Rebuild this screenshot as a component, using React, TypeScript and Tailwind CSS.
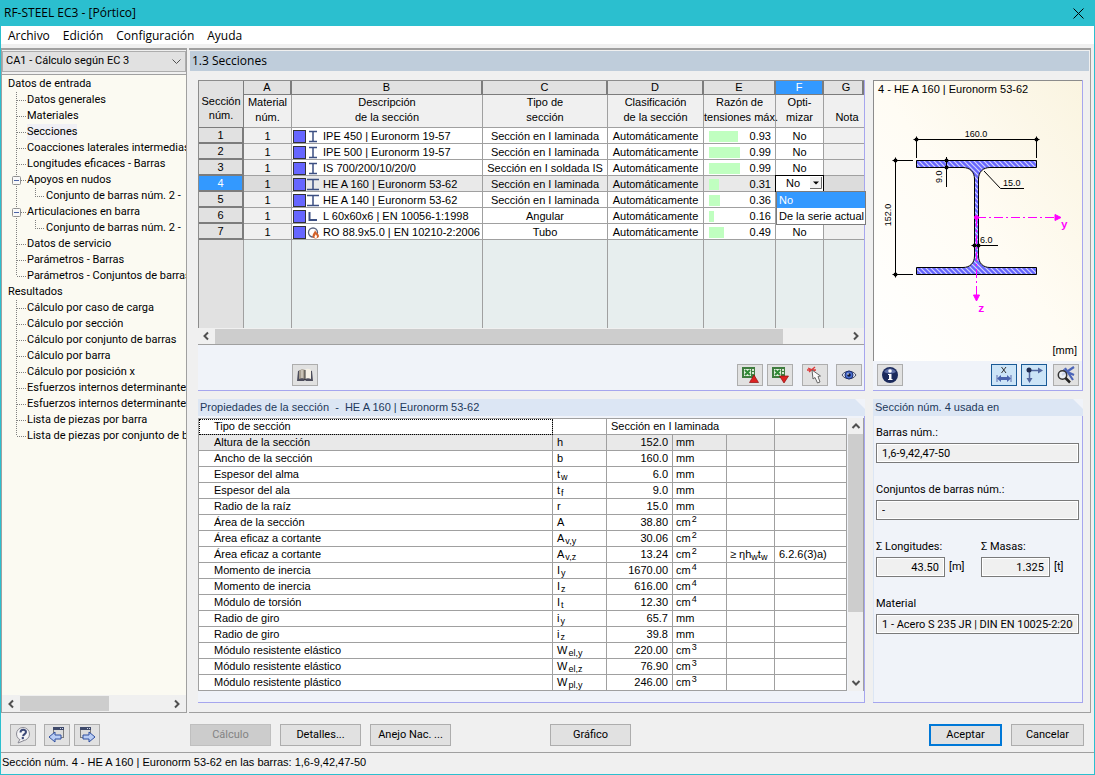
import React, { useState } from 'react';

type TreeItem = {
  label: string;
  kind: 'root' | 'item' | 'last' | 'open' | 'child';
};

const TREE: TreeItem[] = [
  { label: 'Datos de entrada', kind: 'root' },
  { label: 'Datos generales', kind: 'item' },
  { label: 'Materiales', kind: 'item' },
  { label: 'Secciones', kind: 'item' },
  { label: 'Coacciones laterales intermedias', kind: 'item' },
  { label: 'Longitudes eficaces - Barras', kind: 'item' },
  { label: 'Apoyos en nudos', kind: 'open' },
  { label: 'Conjunto de barras núm. 2 -', kind: 'child' },
  { label: 'Articulaciones en barra', kind: 'open' },
  { label: 'Conjunto de barras núm. 2 -', kind: 'child' },
  { label: 'Datos de servicio', kind: 'item' },
  { label: 'Parámetros - Barras', kind: 'item' },
  { label: 'Parámetros - Conjuntos de barras', kind: 'last' },
  { label: 'Resultados', kind: 'root' },
  { label: 'Cálculo por caso de carga', kind: 'item' },
  { label: 'Cálculo por sección', kind: 'item' },
  { label: 'Cálculo por conjunto de barras', kind: 'item' },
  { label: 'Cálculo por barra', kind: 'item' },
  { label: 'Cálculo por posición x', kind: 'item' },
  { label: 'Esfuerzos internos determinantes', kind: 'item' },
  { label: 'Esfuerzos internos determinantes', kind: 'item' },
  { label: 'Lista de piezas por barra', kind: 'item' },
  { label: 'Lista de piezas por conjunto de barras', kind: 'last' },
];

type Shape = 'narrow' | 'wide' | 'angle' | 'tube';

const SECTIONS: { name: string; shape: Shape; type: string; ratio: number }[] = [
  { name: 'IPE 450 | Euronorm 19-57', shape: 'narrow', type: 'Sección en I laminada', ratio: 0.93 },
  { name: 'IPE 500 | Euronorm 19-57', shape: 'narrow', type: 'Sección en I laminada', ratio: 0.99 },
  { name: 'IS 700/200/10/20/0', shape: 'narrow', type: 'Sección en I soldada IS', ratio: 0.99 },
  { name: 'HE A 160 | Euronorm 53-62', shape: 'wide', type: 'Sección en I laminada', ratio: 0.31 },
  { name: 'HE A 140 | Euronorm 53-62', shape: 'wide', type: 'Sección en I laminada', ratio: 0.36 },
  { name: 'L 60x60x6 | EN 10056-1:1998', shape: 'angle', type: 'Angular', ratio: 0.16 },
  { name: 'RO 88.9x5.0 | EN 10210-2:2006', shape: 'tube', type: 'Tubo', ratio: 0.49 },
];

// name, symbol, subscript, value, unit, exponent
const PROPS: [string, string, string, string, string, string][] = [
  ['Altura de la sección', 'h', '', '152.0', 'mm', ''],
  ['Ancho de la sección', 'b', '', '160.0', 'mm', ''],
  ['Espesor del alma', 't', 'w', '6.0', 'mm', ''],
  ['Espesor del ala', 't', 'f', '9.0', 'mm', ''],
  ['Radio de la raíz', 'r', '', '15.0', 'mm', ''],
  ['Área de la sección', 'A', '', '38.80', 'cm', '2'],
  ['Área eficaz a cortante', 'A', 'v,y', '30.06', 'cm', '2'],
  ['Área eficaz a cortante', 'A', 'v,z', '13.24', 'cm', '2'],
  ['Momento de inercia', 'I', 'y', '1670.00', 'cm', '4'],
  ['Momento de inercia', 'I', 'z', '616.00', 'cm', '4'],
  ['Módulo de torsión', 'I', 't', '12.30', 'cm', '4'],
  ['Radio de giro', 'i', 'y', '65.7', 'mm', ''],
  ['Radio de giro', 'i', 'z', '39.8', 'mm', ''],
  ['Módulo resistente elástico', 'W', 'el,y', '220.00', 'cm', '3'],
  ['Módulo resistente elástico', 'W', 'el,z', '76.90', 'cm', '3'],
  ['Módulo resistente plástico', 'W', 'pl,y', '246.00', 'cm', '3'],
];

function TreeGuide({ kind }: { kind: TreeItem['kind'] }) {
  if (kind === 'root') return <span className="w-[5px] shrink-0" />;
  const line = { stroke: '#808080', strokeDasharray: '1 1' };
  if (kind === 'child') {
    return (
      <svg className="w-[43px] h-4 shrink-0" viewBox="0 0 43 16">
        <path d="M13.5 0V16M32.5 0V8M32 8.5H42" fill="none" {...line} />
      </svg>
    );
  }
  return (
    <svg className="w-[24px] h-4 shrink-0" viewBox="0 0 24 16">
      <path d={kind === 'last' ? 'M13.5 0V8M14 8.5H23' : 'M13.5 0V16M14 8.5H23'} fill="none" {...line} />
      {kind === 'open' && (
        <>
          <rect x="9.5" y="4.5" width="8" height="8" rx="1" fill="#f8f8f8" stroke="#919191" />
          <path d="M11 8.5H16" stroke="#4b63a7" />
        </>
      )}
    </svg>
  );
}

function Chevron({ dir }: { dir: 'left' | 'right' | 'up' | 'down' }) {
  const d = {
    left: 'M10 4.5L6.5 8L10 11.5',
    right: 'M6 4.5L9.5 8L6 11.5',
    up: 'M4.5 10L8 6.5L11.5 10',
    down: 'M4.5 6L8 9.5L11.5 6',
  }[dir];
  return (
    <svg className="size-4 shrink-0" viewBox="0 0 16 16">
      <path d={d} fill="none" stroke="#505050" strokeWidth="2" />
    </svg>
  );
}

function ShapeIcon({ shape }: { shape: Shape }) {
  return (
    <svg className="w-[12px] h-[13px] shrink-0" viewBox="0 0 12 13">
      {shape === 'narrow' && <path d="M2 1.5H10M6 2V11M2 11.5H10" stroke="#3c4f82" strokeWidth="1.5" />}
      {shape === 'wide' && <path d="M0 1.5H12M6 2V11M0 11.5H12" stroke="#3c4f82" strokeWidth="1.5" />}
      {shape === 'angle' && <path d="M2.5 2V10H10" fill="none" stroke="#3c4f82" strokeWidth="2" />}
      {shape === 'tube' && (
        <>
          <circle cx="6" cy="6.5" r="4.5" fill="none" stroke="#5a6480" strokeWidth="1.3" />
          <path d="M8 4c0 2-2.5 3.5-2.5 6 0 1.5 1.2 2.5 3 2.5S12 11.5 12 10c0-2.5-3-3-4-6z" fill="#d4622a" />
          <path d="M8.7 8c0 1.5-1.2 1.5-1.2 3 0 .7.5 1 1.2 1s1.3-.4 1.3-1.2C10 9.5 9 9 8.7 8z" fill="#fff" />
        </>
      )}
    </svg>
  );
}

function IconButton({ label, active, children }: { label: string; active?: boolean; children: React.ReactNode }) {
  return (
    <button
      aria-label={label}
      className={`flex h-[22px] w-[26px] shrink-0 items-center justify-center border ${
        active ? 'border-[#1a5a96] bg-[#cce4f7]' : 'border-[#adadad] bg-[#e1e1e1]'
      }`}
    >
      <svg className="size-[18px]" viewBox="0 0 18 18">
        {children}
      </svg>
    </button>
  );
}

function PushButton({ children, className = '', disabled }: { children: React.ReactNode; className?: string; disabled?: boolean }) {
  return (
    <button
      disabled={disabled}
      className={`h-[22px] border border-[#adadad] bg-[#e1e1e1] text-center disabled:border-[#bfbfbf] disabled:bg-[#cccccc] disabled:text-[#838383] ${className}`}
    >
      {children}
    </button>
  );
}

function ExcelGlyph() {
  return (
    <>
      <rect x="1" y="1" width="13" height="11" fill="#3f7d3f" />
      <rect x="3" y="3" width="7" height="7" fill="#e6f0e2" />
      <rect x="11" y="3" width="2" height="2" fill="#d5e6d0" />
      <rect x="11" y="6" width="2" height="2" fill="#d5e6d0" />
      <path d="M4 4L9 9M9 4L4 9" stroke="#2f8a35" strokeWidth="2" />
    </>
  );
}

function WindowGlyph() {
  return (
    <>
      <rect x="5.5" y="1.5" width="10" height="10" fill="#dcdcdc" stroke="#7c7c7c" />
      <rect x="5" y="1" width="11" height="3" fill="#3f4a6b" />
      <path d="M12 2.5H15" stroke="#cfd6ea" strokeDasharray="1 1" />
    </>
  );
}

function SectionDrawing() {
  const tick = (x: number, y: number) => (
    <g key={`${x}-${y}`}>
      <path d={`M${x - 3} ${y}H${x + 3}M${x} ${y - 3}V${y + 3}`} stroke="#000" />
      <circle cx={x} cy={y} r="2" fill="#000" />
    </g>
  );
  return (
    <svg className="block h-[265px] w-[208px]" viewBox="0 15 208 265" fontFamily="Liberation Sans, sans-serif" fontSize="9">
      <defs>
        <pattern id="hatch" width="5" height="5" patternUnits="userSpaceOnUse">
          <rect width="5" height="5" fill="#6666ff" />
          <path d="M-1 -1L6 6M4 -1L6 1M-1 4L1 6" stroke="#d4d4fa" strokeWidth="1.2" />
        </pattern>
      </defs>
      <path
        d="M42.5 79.5H162.5V86.5H116C109 86.5 104.5 91 104.5 98V175C104.5 182 109 186.5 116 186.5H162.5V193.5H42.5V186.5H89C96 186.5 100.5 182 100.5 175V98C100.5 91 96 86.5 89 86.5H42.5Z"
        fill="url(#hatch)"
        stroke="#000"
      />
      <path d="M40 58.5H165M42.5 56V77M162.5 56V77" stroke="#000" fill="none" />
      <path d="M21.5 77V196M19 79.5H39M19 193.5H39" stroke="#000" fill="none" />
      <path d="M72.5 76V106M98 164.5H124" stroke="#000" fill="none" />
      <path d="M110 90L126.5 107.5H150" stroke="#000" fill="none" />
      {tick(42.5, 58.5)}
      {tick(162.5, 58.5)}
      {tick(21.5, 79.5)}
      {tick(21.5, 193.5)}
      {tick(72.5, 79.5)}
      {tick(72.5, 86.5)}
      {tick(100.5, 164.5)}
      {tick(104.5, 164.5)}
      <text x="102" y="56" textAnchor="middle">160.0</text>
      <text x="129" y="105">15.0</text>
      <text x="106" y="162">6.0</text>
      <text transform="translate(68 108) rotate(-90)" x="6">9.0</text>
      <text transform="translate(17 134) rotate(-90)" textAnchor="middle">152.0</text>
      <g stroke="#ff00ff" fill="#ff00ff">
        <path d="M103 136.5H183" strokeDasharray="9 3 2 3" />
        <path d="M102.5 137V214" strokeDasharray="9 3 2 3" />
        <path d="M181 133.5L187 136.5L181 139.5ZM99.5 214L102.5 220L105.5 214Z" />
        <circle cx="102.5" cy="136.5" r="2" />
      </g>
      <g fill="#ff00ff" fontFamily="Liberation Mono, monospace" fontSize="11" fontWeight="bold">
        <text x="187" y="147">y</text>
        <text x="104" y="231">z</text>
      </g>
      <text x="203" y="273" textAnchor="end" fontSize="11">[mm]</text>
    </svg>
  );
}

const COLUMN_HEADS: [string, string, string][] = [
  ['A', 'Material', 'núm.'],
  ['B', 'Descripción', 'de la sección'],
  ['C', 'Tipo de', 'sección'],
  ['D', 'Clasificación', 'de la sección'],
  ['E', 'Razón de', 'tensiones máx.'],
  ['F', 'Opti-', 'mizar'],
  ['G', '', 'Nota'],
];

const border = 'h-4 border-b border-r border-[#a0a0a0] whitespace-nowrap';
const cell = `${border} p-0 leading-[15px]`;
const lowCell = `${border} p-0 pt-px leading-[14px]`;

function SectionsTable() {
  const [optimize, setOptimize] = useState('No');
  const current = 3;

  return (
    <table className="w-full table-fixed border-separate border-spacing-0 border-l border-t border-[#8c8c8c] text-center font-['Liberation_Sans',sans-serif] text-[11px]">
      <colgroup>
        <col className="w-[45px]" />
        <col className="w-[48px]" />
        <col className="w-[191px]" />
        <col className="w-[125px]" />
        <col className="w-[96px]" />
        <col className="w-[72px]" />
        <col className="w-[48px]" />
        <col />
      </colgroup>
      <thead>
        <tr>
          <th rowSpan={2} className="border-b border-r border-[#7c7c7c] bg-[#e1e1e1] p-0 pt-2 font-normal leading-[14px]">
            Sección
            <br />
            núm.
          </th>
          {COLUMN_HEADS.map(([letter]) => (
            <th
              key={letter}
              className={`h-[14px] border-b border-r-2 border-[#7c7c7c] p-0 font-normal leading-[13px] ${
                letter === 'F' ? 'bg-[#3399ff] text-white' : 'bg-[#e1e1e1]'
              } ${letter === 'G' ? 'border-r-0 pl-[6px]' : ''}`}
            >
              {letter}
            </th>
          ))}
        </tr>
        <tr>
          {COLUMN_HEADS.map(([letter, top, bottom]) => (
            <th
              key={letter}
              className={`h-[33px] border-b border-[#a0a0a0] bg-[#f0f0f0] p-0 align-top font-normal leading-[15px] whitespace-nowrap ${
                letter === 'G' ? 'pl-[6px]' : 'border-r'
              }`}
            >
              {top || '\u00a0'}
              <br />
              {bottom}
            </th>
          ))}
        </tr>
      </thead>
      <tbody>
        {SECTIONS.map((s, i) => {
          const on = i === current;
          const bg = on ? 'bg-[#e9e9e9]' : 'bg-white';
          return (
            <tr key={s.name}>
              <th
                className={`h-4 border-b-2 border-r-2 border-[#7c7c7c] p-0 font-normal leading-[14px] ${
                  on ? 'bg-[#3399ff] text-white' : 'bg-[#e1e1e1]'
                }`}
              >
                {i + 1}
              </th>
              <td className={`${lowCell} ${on ? 'bg-[#dcdcdc]' : 'bg-[#f0f0f0]'}`}>1</td>
              <td className={`${lowCell} ${bg}`}>
                <div className="flex h-[14px] items-center pl-px text-left">
                  <span className="size-[13px] shrink-0 border border-[#333] bg-[#6666ff]" />
                  <span className="mr-[4px] ml-px flex">
                    <ShapeIcon shape={s.shape} />
                  </span>
                  {s.name}
                </div>
              </td>
              <td className={`${lowCell} ${bg}`}>{s.type}</td>
              <td className={`${lowCell} ${bg}`}>Automáticamente</td>
              <td className={`${lowCell} ${bg}`}>
                <div className="flex h-[14px] items-center justify-between pr-1 pl-[5px]">
                  <span className="h-[11px] bg-[#c0ffc0]" style={{ width: Math.round(s.ratio * 31) }} />
                  {s.ratio.toFixed(2)}
                </div>
              </td>
              {on ? (
                <td className={`${cell} bg-white`}>
                  <div className="relative flex h-[15px] items-center bg-white outline-1 outline-black">
                    <select
                      aria-label="Optimizar"
                      value={optimize}
                      onChange={(e) => setOptimize(e.target.value)}
                      className="h-[13px] w-full appearance-none bg-transparent pl-[10px] leading-[13px] outline-none"
                    >
                      <option>No</option>
                      <option>De la serie actual</option>
                    </select>
                    <svg className="absolute top-px right-px size-[12px] bg-[#f0f0f0]" viewBox="0 0 12 12">
                      <path d="M0 11.5H11.5V0" fill="none" stroke="#696969" />
                      <path d="M3 4.5H9L6 7.5Z" />
                    </svg>
                    <ul className="absolute top-[15px] left-0 z-10 w-[90px] border border-[#7c7c7c] bg-white text-left leading-4">
                      {['No', 'De la serie actual'].map((opt) => (
                        <li key={opt} className={`pl-[2px] ${opt === optimize ? 'bg-[#3399ff] text-white' : ''}`}>
                          {opt}
                        </li>
                      ))}
                    </ul>
                  </div>
                </td>
              ) : (
                <td className={`${lowCell} bg-white`}>No</td>
              )}
              <td className={`h-4 border-b border-[#a0a0a0] p-0 ${on ? 'bg-[#dcdcdc]' : 'bg-[#f0f0f0]'}`} />
            </tr>
          );
        })}
        <tr>
          <td className="h-[88px] border-r border-[#a0a0a0] bg-[#e1e1e1] p-0" />
          {COLUMN_HEADS.map(([letter]) => (
            <td key={letter} className={`border-[#a0a0a0] bg-[#e7eeee] p-0 ${letter === 'G' ? '' : 'border-r'}`} />
          ))}
        </tr>
      </tbody>
    </table>
  );
}

function PropertiesTable() {
  return (
    <table className="min-w-0 flex-1 table-fixed border-separate border-spacing-0 border-l border-t border-[#a0a0a0] bg-white text-left font-['Liberation_Sans',sans-serif] text-[11px]">
      <colgroup>
        <col />
        <col className="w-[54px]" />
        <col className="w-[66px]" />
        <col className="w-[54px]" />
        <col className="w-[48px]" />
        <col className="w-[72px]" />
      </colgroup>
      <tbody>
        <tr>
          <td className={`${cell} pl-[15px] outline-1 -outline-offset-1 outline-dotted outline-black`}>Tipo de sección</td>
          <td className={cell} />
          <td colSpan={3} className={`${cell} pl-1`}>
            Sección en I laminada
          </td>
          <td className={cell} />
        </tr>
        {PROPS.map(([name, sym, sub, value, unit, exp], i) => (
          <tr key={i} className={i === 0 ? 'bg-[#e9e9e9]' : ''}>
            <td className={`${cell} pl-[15px]`}>{name}</td>
            <td className={`${cell} pl-1`}>
              {sym}
              {sub && <sub className="pl-px text-[9px]">{sub}</sub>}
            </td>
            <td className={`${cell} pr-1 text-right`}>{value}</td>
            <td className={`${cell} pl-[3px]`}>
              {unit}
              {exp && <sup className="pl-px text-[9px]">{exp}</sup>}
            </td>
            <td className={`${cell} pl-[3px]`}>
              {sub === 'v,z' && (
                <>
                  ≥ ηh<sub className="text-[9px]">w</sub>t<sub className="text-[9px]">w</sub>
                </>
              )}
            </td>
            <td className={`${cell} pl-1`}>{sub === 'v,z' && '6.2.6(3)a)'}</td>
          </tr>
        ))}
      </tbody>
    </table>
  );
}

function PanelHeader({ children }: { children: React.ReactNode }) {
  return (
    <h2 className="h-[17px] bg-[#dce6f4] pl-[2px] font-['Liberation_Sans',sans-serif] text-[11px] leading-[17px] whitespace-pre text-[#1e395b] [clip-path:polygon(0_0,calc(100%-10px)_0,100%_10px,100%_100%,0_100%)]">
      {children}
    </h2>
  );
}

function Field({ id, label, value, unit, className = '' }: { id: string; label: string; value: string; unit?: string; className?: string }) {
  return (
    <div className={className}>
      <label htmlFor={id} className="block h-[19px] leading-[17px]">
        {label}
      </label>
      <div className="flex items-center gap-1">
        <input
          id={id}
          readOnly
          value={value}
          className={`h-5 border border-[#7a7a7a] bg-[#f0f0f0] px-[5px] ring-1 ring-white ring-inset ${
            unit ? 'w-[69px] text-right' : 'w-full min-w-0'
          }`}
        />
        {unit && <span>{unit}</span>}
      </div>
    </div>
  );
}

export default function App() {
  const [selected, setSelected] = useState(3);

  return (
    <div className="flex min-h-screen flex-col border-x border-b border-[#2bbfcf] bg-[#f0f0f0] font-['Roboto',sans-serif] text-[11px] text-black">
      <header className="flex h-[26px] items-center justify-between bg-[#2bbfcf] pr-[10px] pl-[3px] font-['Open_Sans',sans-serif] text-[12px]">
        <h1>RF-STEEL EC3 - [Pórtico]</h1>
        <button aria-label="Cerrar">
          <svg className="size-[11px]" viewBox="0 0 11 11">
            <path d="M.5.5L10.5 10.5M10.5.5L.5 10.5" stroke="#000" fill="none" />
          </svg>
        </button>
      </header>

      <nav className="flex h-[18px] items-center gap-[13px] bg-white pt-px pl-[7px] font-['Open_Sans',sans-serif] text-[12px]">
        {['Archivo', 'Edición', 'Configuración', 'Ayuda'].map((m) => (
          <button key={m}>{m}</button>
        ))}
      </nav>

      <div className="flex flex-1 gap-[2px] pt-1">
        {/* navigator */}
        <aside className="flex w-[186px] shrink-0 flex-col border border-t-2 border-[#a0a0a0]">
          <div className="relative mt-px border border-[#adadad] bg-[#e1e1e1]">
            <select
              aria-label="Caso de cálculo"
              className="block h-[19px] w-full appearance-none pl-[3px] text-[11px] outline-none"
            >
              <option>CA1 - Cálculo según EC 3</option>
            </select>
            <svg className="pointer-events-none absolute top-[7px] right-[4px] h-[6px] w-[9px]" viewBox="0 0 9 6">
              <path d="M.5.5L4.5 4.5L8.5.5" fill="none" stroke="#505050" />
            </svg>
          </div>
          <ul className="mt-[2px] flex-1 overflow-hidden border-t border-[#a0a0a0] bg-[#fbfaf2] pt-px">
            {TREE.map((item, i) => (
              <li key={i} className="flex h-4 items-center pl-px whitespace-nowrap">
                <TreeGuide kind={item.kind} />
                <button
                  onClick={() => setSelected(i)}
                  className={`h-4 leading-4 ${i === selected ? 'bg-[#f0f0f5]' : ''}`}
                >
                  {item.label}
                </button>
              </li>
            ))}
          </ul>
          <div className="flex h-[17px] items-center justify-between bg-[#f0f0f0] px-px">
            <Chevron dir="left" />
            <span className="mr-auto ml-px h-[15px] w-[89px] bg-[#cdcdcd]" />
            <Chevron dir="right" />
          </div>
        </aside>

        {/* input mask */}
        <main className="flex min-w-0 flex-1 flex-col border-t-2 border-r border-b border-[#a0a0a0] pl-px">
          <h2 className="mt-px mr-px h-[20px] bg-[#bfcddb] pl-[2px] font-['Open_Sans',sans-serif] text-[12px] leading-[20px]">1.3 Secciones</h2>
          <div className="flex flex-1 gap-2 pt-[9px] pr-[7px] pb-[9px] pl-2">
            <div className="flex min-w-0 flex-1 flex-col gap-2">
              <section className="flex h-[311px] flex-col border-r border-b border-[#a6a6ee] bg-[#f0f3f9]">
                <SectionsTable />
                <div className="flex h-[17px] items-center border-b border-[#a0a0a0] bg-[#f0f0f0]">
                  <Chevron dir="left" />
                  <span className="mr-auto ml-px h-[15px] w-[568px] bg-[#cdcdcd]" />
                  <Chevron dir="right" />
                </div>
                <div className="mt-[19px] flex pr-[2px] pl-[94px]">
                  <IconButton label="Biblioteca de secciones">
                    <path d="M2 5L1 15H8L9 14L10 15H17L16 5L13 4L9 5L5 4Z" fill="#4d4d5c" />
                    <path d="M3 5C5 3 7 3 9 4V13C7 12 5 12 3 13Z" fill="#a89f90" />
                    <path d="M9 4C11 2 13 3 15 4L15 13C13 12 11 12 9 13Z" fill="#f6f1e6" />
                    <path d="M6 4V12" stroke="#e8e4da" />
                    <path d="M9 4V14" stroke="#333" />
                  </IconButton>
                  <div className="ml-auto flex gap-1">
                    <IconButton label="Exportar a Excel">
                      <ExcelGlyph />
                      <path d="M13 9L17.5 16.5H8.5Z" fill="#dd2222" stroke="#8f0f0f" strokeWidth=".7" />
                    </IconButton>
                    <IconButton label="Importar de Excel">
                      <ExcelGlyph />
                      <path d="M13 17L17.5 10H8.5Z" fill="#dd2222" stroke="#8f0f0f" strokeWidth=".7" />
                    </IconButton>
                  </div>
                  <div className="ml-[9px] flex gap-2">
                    <IconButton label="Seleccionar barra">
                      <path d="M2 2L9 5M3 6L9 1M1 4H10" stroke="#dd3b3b" strokeWidth="1.3" />
                      <path d="M6 4L7 13L9 11.5L11.5 17L14 16L12 10.5L14.5 10Z" fill="#fafafa" stroke="#666" />
                    </IconButton>
                    <IconButton label="Ver">
                      <path d="M2 9C5 4 13 4 16 9C13 14 5 14 2 9Z" fill="#dfe3ee" stroke="#444c66" />
                      <circle cx="9" cy="9" r="4" fill="#4b6fd0" stroke="#1e2f70" />
                      <circle cx="9" cy="9" r="1.8" fill="#101838" />
                      <circle cx="8" cy="8" r=".8" fill="#fff" />
                    </IconButton>
                  </div>
                </div>
              </section>

              <section className="flex flex-1 flex-col border-b border-[#a6a6ee] bg-[#f0f3f9]">
                <PanelHeader>{'Propiedades de la sección  -  HE A 160 | Euronorm 53-62'}</PanelHeader>
                <div className="flex flex-1 border-r border-[#a6a6ee] pt-[2px] pb-[11px]">
                  <PropertiesTable />
                  <div className="ml-px flex w-[16px] flex-col border-r border-[#a0a0a0] bg-[#f0f0f0]">
                    <Chevron dir="up" />
                    <span className="h-[178px] bg-[#cdcdcd]" />
                    <span className="mt-auto flex">
                      <Chevron dir="down" />
                    </span>
                  </div>
                </div>
              </section>
            </div>

            <div className="flex w-[210px] shrink-0 flex-col gap-2">
              <section className="flex h-[311px] flex-col border-r border-b border-[#a6a6ee] bg-[#f0f3f9]">
                <div className="border-t border-l border-[#8c8c8c] bg-linear-to-tr from-[#ffffff] via-[#fffcf4] to-[#faf4e0]">
                  <p className="h-[15px] pl-1 font-['Liberation_Sans',sans-serif] text-[11px] leading-[16px] whitespace-nowrap">
                    4 - HE A 160 | Euronorm 53-62
                  </p>
                  <SectionDrawing />
                </div>
                <div className="mt-[3px] flex pr-[3px] pl-1">
                  <IconButton label="Información">
                    <circle cx="9" cy="9" r="8" fill="#1b2a5c" />
                    <path d="M3 6A7 7 0 0 1 15 6Q9 9 3 6Z" fill="#5d6ea6" />
                    <circle cx="9" cy="5" r="1.8" fill="#fff" />
                    <path d="M7 8H10.5V13H11.5V14H7V13H8V9H7Z" fill="#fff" />
                  </IconButton>
                  <div className="mr-[6px] ml-auto flex gap-1">
                    <IconButton label="Acotaciones" active>
                      <path d="M6.5 1L11 7M11 1L6.5 7" stroke="#333" />
                      <path d="M2 9V16M16 9V16" stroke="#5c6fae" />
                      <path d="M2 12.5L6 9V11H12V9L16 12.5L12 16V14H6V16Z" fill="#4b64ae" />
                    </IconButton>
                    <IconButton label="Ejes" active>
                      <path d="M4.5 4.5H14M4.5 4.5V13" fill="none" stroke="#51669f" strokeWidth="1.5" />
                      <path d="M13 1.5L18 4.5L13 7.5ZM1.5 12L4.5 17L7.5 12Z" fill="#51669f" />
                      <circle cx="4" cy="4" r="2.5" fill="#1f2c52" />
                    </IconButton>
                  </div>
                  <IconButton label="Vista completa">
                    <path d="M17 1L5 9M8 2L16 14M6 4L17 9" stroke="#4b64b8" strokeWidth="2.2" />
                    <circle cx="5.5" cy="9" r="4.2" fill="#eef2f8" fillOpacity=".8" stroke="#333" strokeWidth="1.5" />
                    <path d="M8.5 12L13 16.5" stroke="#222" strokeWidth="2.5" />
                  </IconButton>
                </div>
              </section>

              <section className="flex flex-1 flex-col border-b border-[#a6a6ee] bg-[#f0f3f9]">
                <PanelHeader>Sección núm. 4 usada en</PanelHeader>
                <div className="flex flex-1 flex-col gap-[18px] border-r border-l border-r-[#a6a6ee] border-l-[#dce6f4] pt-2 pr-[3px] pl-[2px]">
                  <Field id="members" label="Barras núm.:" value="1,6-9,42,47-50" />
                  <Field id="sets" label="Conjuntos de barras núm.:" value="-" />
                  <div className="flex">
                    <Field id="lengths" label="Σ Longitudes:" value="43.50" unit="[m]" className="w-[105px]" />
                    <Field id="masses" label="Σ Masas:" value="1.325" unit="[t]" />
                  </div>
                  <Field id="material" label="Material" value="1 - Acero S 235 JR | DIN EN 10025-2:2004-11" />
                </div>
              </section>
            </div>
          </div>
        </main>
        <div className="w-px" />
      </div>

      <footer>
        <div className="flex h-[39px] items-center pt-[5px] pr-[10px] pl-[9px]">
          <IconButton label="Ayuda">
            <circle cx="9" cy="8" r="6.5" fill="#f4f4f6" stroke="#8b8b95" />
            <path d="M6 13L4 17L10 14.5" fill="#f4f4f6" stroke="#8b8b95" />
            <path d="M6.5 6.5C6.5 3 12 3 12 6C12 8 9.5 8 9 10" fill="none" stroke="#3d4a78" strokeWidth="2" />
            <circle cx="8.8" cy="12" r="1.2" fill="#3d4a78" />
          </IconButton>
          <div className="ml-2 flex gap-1">
            <IconButton label="Anterior">
              <WindowGlyph />
              <path d="M1 11L7 6V9H13V13H7V16Z" fill="#b9cdf5" stroke="#2f4fa0" />
            </IconButton>
            <IconButton label="Siguiente">
              <g transform="translate(-3 0)">
                <WindowGlyph />
              </g>
              <path d="M17 11L11 6V9H5V13H11V16Z" fill="#b9cdf5" stroke="#2f4fa0" />
            </IconButton>
          </div>
          <div className="ml-[90px] flex gap-[9px]">
            <PushButton disabled className="w-[81px]">Cálculo</PushButton>
            <PushButton className="w-[81px]">Detalles...</PushButton>
            <PushButton className="w-[81px]">Anejo Nac. ...</PushButton>
          </div>
          <PushButton className="ml-[99px] w-[81px]">Gráfico</PushButton>
          <div className="ml-auto flex gap-[9px]">
            <PushButton className="w-[73px] outline-2 -outline-offset-2 outline-[#0078d7]">Aceptar</PushButton>
            <PushButton className="w-[73px]">Cancelar</PushButton>
          </div>
        </div>
        <p className="h-[22px] border-t border-[#a0a0a0] pl-px font-['Liberation_Sans',sans-serif] text-[11px] leading-[18px]">
          Sección núm. 4 - HE A 160 | Euronorm 53-62 en las barras: 1,6-9,42,47-50
        </p>
      </footer>
    </div>
  );
}
